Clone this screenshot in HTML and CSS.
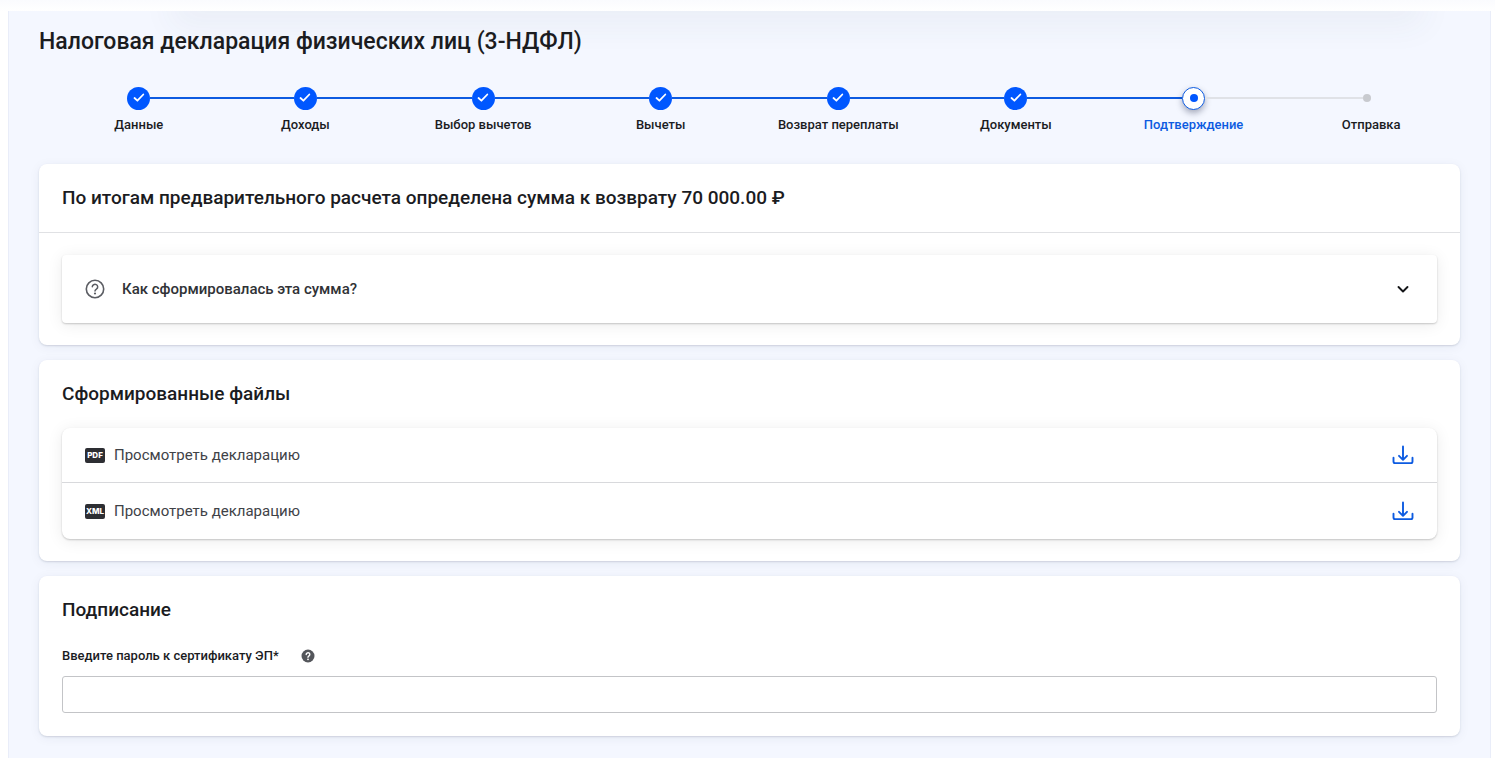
FILE: index.html
```html
<!DOCTYPE html>
<html lang="ru">
<head>
<meta charset="utf-8">
<meta name="viewport" content="width=device-width, initial-scale=1">
<title>Налоговая декларация физических лиц (3-НДФЛ)</title>
<link rel="stylesheet" href="styles.css">
</head>
<body>
<svg class="sprite" aria-hidden="true">
  <symbol id="check" viewBox="0 0 12 12"><path d="M1.5 6 4.400 8.700 10.300 2.500" fill="none" stroke="currentColor" stroke-width="1.800" stroke-linecap="round" stroke-linejoin="round"/></symbol>
  <symbol id="download" viewBox="0 0 22 20"><path d="M11 1.500v13M7 10.800l4 4 4-4M1.500 12.800v3.700a1.600 1.600 0 0 0 1.600 1.600h15.800a1.600 1.600 0 0 0 1.600-1.600v-3.700" fill="none" stroke="currentColor" stroke-width="1.900" stroke-linecap="round" stroke-linejoin="round"/></symbol>
</svg>
<main class="page">
  <h1 class="page-title">Налоговая декларация физических лиц (3-НДФЛ)</h1>

  <ol class="steps">
    <li class="step done"><div class="track"><span class="marker"><svg><use href="#check"/></svg></span></div><span class="step-label">Данные</span></li>
    <li class="step done"><div class="track"><span class="marker"><svg><use href="#check"/></svg></span></div><span class="step-label">Доходы</span></li>
    <li class="step done"><div class="track"><span class="marker"><svg><use href="#check"/></svg></span></div><span class="step-label">Выбор вычетов</span></li>
    <li class="step done"><div class="track"><span class="marker"><svg><use href="#check"/></svg></span></div><span class="step-label">Вычеты</span></li>
    <li class="step done"><div class="track"><span class="marker"><svg><use href="#check"/></svg></span></div><span class="step-label">Возврат переплаты</span></li>
    <li class="step done"><div class="track"><span class="marker"><svg><use href="#check"/></svg></span></div><span class="step-label">Документы</span></li>
    <li class="step current" aria-current="step"><div class="track"><span class="marker"></span></div><span class="step-label">Подтверждение</span></li>
    <li class="step pending"><div class="track"><span class="marker"></span></div><span class="step-label">Отправка</span></li>
  </ol>

  <section class="card">
    <h2 class="card-title ruled">По итогам предварительного расчета определена сумма к возврату 70 000.00 ₽</h2>
    <div class="card-body">
      <button class="accordion" type="button" aria-expanded="false">
        <svg class="icon-question" viewBox="0 0 20 20" aria-hidden="true"><circle cx="10" cy="10" r="8.700" fill="none" stroke="currentColor" stroke-width="1.600"/><path d="M7.300 7.800a2.700 2.500 0 1 1 4.300 2.100c-.9.600-1.600 1-1.600 2" fill="none" stroke="currentColor" stroke-width="1.500" stroke-linecap="round"/><circle cx="10" cy="14.500" r="1.100" fill="currentColor"/></svg>
        <span class="accordion-text">Как сформировалась эта сумма?</span>
        <svg class="icon-chevron" viewBox="0 0 20 20" aria-hidden="true"><path d="m5.500 8 4.500 4.500L14.500 8" fill="none" stroke="currentColor" stroke-width="1.900" stroke-linecap="round" stroke-linejoin="round"/></svg>
      </button>
    </div>
  </section>

  <section class="card">
    <h2 class="card-title">Сформированные файлы</h2>
    <ul class="files">
      <li class="file"><span class="badge">PDF</span><a class="file-link" href="#pdf">Просмотреть декларацию</a><button class="download" type="button" aria-label="Скачать PDF"><svg><use href="#download"/></svg></button></li>
      <li class="file"><span class="badge">XML</span><a class="file-link" href="#xml">Просмотреть декларацию</a><button class="download" type="button" aria-label="Скачать XML"><svg><use href="#download"/></svg></button></li>
    </ul>
  </section>

  <section class="card">
    <h2 class="card-title">Подписание</h2>
    <div class="field">
      <div class="field-head">
        <label for="password">Введите пароль к сертификату ЭП*</label>
        <button class="hint" type="button" aria-label="Подсказка"><svg viewBox="0 0 14 14"><circle cx="7" cy="7" r="6.500" fill="currentColor"/><path d="M5.200 5.500a1.800 1.700 0 1 1 2.800 1.400c-.7.500-1 .7-1 1.300" fill="none" stroke="#fff" stroke-width="1.400" stroke-linecap="round"/><circle cx="7" cy="10.300" r=".9" fill="#fff"/></svg></button>
      </div>
      <input id="password" class="input" type="password">
    </div>
  </section>
</main>
</body>
</html>
```
FILE: styles.css
```css
* { box-sizing: border-box; }

body {
  margin: 0;
  padding: 11px 4px 0 8px;
  min-height: 100vh;
  display: flex;
  background: linear-gradient(#fafbfe, #ffffff 11px);
  font-family: Roboto, "Noto Sans", sans-serif;
  color: #1b1c1f;
}

h1, h2 { margin: 0; font-weight: 500; }
ul, ol { margin: 0; padding: 0; list-style: none; }
button { border: 0; padding: 0; background: none; font: inherit; color: inherit; cursor: pointer; }
svg { display: block; }
.sprite { position: absolute; width: 0; height: 0; }

.page {
  position: relative;
  flex: 1;
  min-width: 0;
  overflow: hidden;
  padding: 16px 30px 21px;
  border: solid #e9edf9;
  border-width: 0 1px;
  background: #f4f7ff;
}

.page::before {
  content: "";
  position: absolute;
  top: -24px;
  left: 170px;
  right: 74px;
  height: 24px;
  box-shadow: 0 8px 32px 8px rgba(60, 70, 90, 0.05);
}

.page-title { position: relative; font-size: 23px; line-height: 30px; }

.steps { display: grid; grid-template-columns: repeat(8, minmax(0, 1fr)); margin: 29px 0 31px; }
.step { display: flex; flex-direction: column; gap: 7px; text-align: center; }
.step:first-child { padding-left: 22px; }
.track { display: flex; align-items: center; height: 24px; }
.track::before, .track::after { content: ""; flex: 1; height: 2px; background: #0d5be1; }
.step:first-child .track::before, .step:last-child .track::after { background: none; }
.current .track::after, .pending .track::before { background: #e0e2e7; }
.marker { display: flex; align-items: center; justify-content: center; width: 23px; height: 23px; border-radius: 50%; background: #0057ff; color: #fff; }
.marker svg { width: 12px; height: 12px; }
.current .marker { border: 1px solid #0d5be1; background: #fff; box-shadow: 0 3px 6px rgba(20, 30, 60, 0.35); }
.current .marker::before { content: ""; width: 8px; height: 8px; border-radius: 50%; background: #0057ff; }
.pending .marker { width: 16px; height: 8px; background: none; justify-content: flex-start; }
.pending .marker::before { content: ""; width: 8px; height: 8px; border-radius: 50%; background: #c8cacf; }
.step-label { font-size: 13px; line-height: 16px; font-weight: 500; white-space: nowrap; }
.current .step-label { color: #0d5be1; }

.card {
  margin-bottom: 15px;
  padding: 0 23px 22px;
  border-radius: 8px;
  background: #fff;
  box-shadow: 0 1px 2px rgba(40, 50, 80, 0.16), 0 2px 12px rgba(40, 50, 80, 0.06);
}
.card:last-child { margin-bottom: 0; }
.card-title { padding: 22px 0; font-size: 19px; line-height: 24px; }
.card-title.ruled { margin: 0 -23px 22px; padding: 22px 23px; border-bottom: 1px solid #e0e1e4; }

.accordion, .files { background: #fff; box-shadow: 0 1px 2px rgba(0, 0, 0, 0.2), 0 2px 16px rgba(0, 0, 0, 0.08); }
.accordion { display: flex; align-items: center; width: 100%; height: 68px; padding: 0 24px 0 23px; gap: 17px; border-radius: 4px; color: #303236; }
.accordion-text { flex: 1; text-align: left; font-size: 15px; line-height: 20px; font-weight: 500; }
.icon-question { width: 20px; height: 20px; color: #5b5d63; }
.icon-chevron { width: 20px; height: 20px; color: #141518; }

.files { border-radius: 8px; }
.file { display: flex; align-items: center; height: 56px; padding: 0 23px; gap: 9px; }
.file:first-child { height: 55px; border-bottom: 1px solid #d8d9dc; }
.badge { width: 20px; height: 15px; border-radius: 2px; background: #2d2e33; color: #fff; font: 800 8px/15px Inter, sans-serif; text-align: center; }
.file-link { flex: 1; color: #404247; font-size: 15px; line-height: 20px; text-decoration: none; }
.download { color: #0d5be1; }
.download svg { width: 22px; height: 20px; }

.field { display: grid; gap: 12px; padding: 4px 0 1px; }
.field-head { display: flex; align-items: center; gap: 22px; font-size: 13px; line-height: 16px; font-weight: 500; }
.hint { color: #54565b; }
.hint svg { width: 14px; height: 14px; }
.input { width: 100%; height: 37px; padding: 0 12px; border: 1px solid #c3c4c7; border-radius: 3px; background: #fff; font: inherit; }
```
